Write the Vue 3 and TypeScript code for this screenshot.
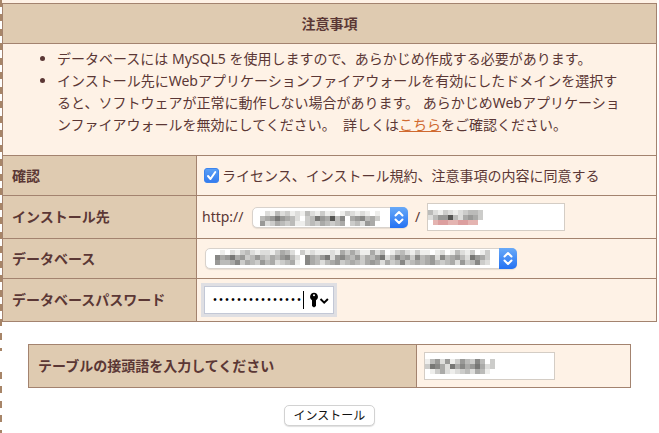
<script setup lang="ts">
import { ref } from 'vue'

interface Mosaic {
  cols: number
  rows: string[]
  pink?: boolean
}

// Each hex digit is the grey level of one 5px block; "f" leaves the block clear.
const hostMosaic: Mosaic = {
  cols: 24,
  rows: [
    'fdebdcedebdecedfecdedefe',
    'ba979abdfcb79a5b8fa98bac',
    '9dcabcbeecbcabcbafcbd9af',
  ],
}
const pathMosaic: Mosaic = {
  cols: 11,
  rows: ['bdecdedcbbc', 'db995bda9ac', 'feddeeddeef'],
  pink: true,
}
const databaseMosaic: Mosaic = {
  cols: 55,
  rows: [
    'fefdecbdeddecabdfcedeeedeacaceeadbfecbdeceefedfebdecfec',
    '8a97a9cb9bcab98bdf8ab97d98ab9cab97db8a9c8ba9d8ba9bd79ac',
    '9bba8cabc9badcbaef8abdba9cbabca9adacb8cbaba9bcbad9cb8cd',
  ],
}
const prefixMosaic: Mosaic = {
  cols: 14,
  rows: ['eb9d9ec9bc8bfc', 'c78ad7a8a97adc', 'fecadedcbdabef'],
}

function blockFill(m: Mosaic, digit: string, row: number, col: number): string {
  if (m.pink && row === 2 && col > 0 && col < m.cols - 1) {
    return digit === 'd' ? '#dc9f9f' : '#e4b4b1'
  }
  if (digit === 'f') return 'none'
  const v = parseInt(digit, 16) * 17
  return `rgb(${v}, ${v}, ${v - 2})`
}

const agreed = ref(true)
const password = ref('•'.repeat(15))
</script>

<template>
  <main class="page">
    <div class="rail" aria-hidden="true">
      <span class="rail-top"></span>
      <span class="rail-bottom"></span>
    </div>

    <form class="content" @submit.prevent>
      <div class="settings">
        <table class="grid">
          <colgroup>
            <col class="name-col" />
            <col />
          </colgroup>
          <tbody>
            <tr class="row">
              <th class="title" colspan="2">注意事項</th>
            </tr>
            <tr>
              <td class="notes" colspan="2">
                <ul>
                  <li>データベースには MySQL5 を使用しますので、あらかじめ作成する必要があります。</li>
                  <li>
                    インストール先にWebアプリケーションファイアウォールを有効にしたドメインを選択す<br />ると、ソフトウェアが正常に動作しない場合があります。
                    あらかじめWebアプリケーショ<br />ンファイアウォールを無効にしてください。&nbsp; 詳しくは<a href="#">こちら</a>をご確認ください。
                  </li>
                </ul>
              </td>
            </tr>
            <tr class="row">
              <th class="name">確認</th>
              <td>
                <label class="agree">
                  <span class="check">
                    <input v-model="agreed" type="checkbox" />
                    <svg v-if="agreed" viewBox="0 0 15 15" aria-hidden="true">
                      <path d="M4 8 6.5 11 11.3 4" />
                    </svg>
                  </span>
                  <span>ライセンス、インストール規約、注意事項の内容に同意する</span>
                </label>
              </td>
            </tr>
            <tr class="row tall">
              <th class="name"><label for="host">インストール先</label></th>
              <td>
                <div class="line">
                  <span class="scheme">http://</span>
                  <span class="picker host">
                    <select id="host"></select>
                    <svg class="mosaic" :viewBox="`0 0 ${hostMosaic.cols * 5} 15`" :width="hostMosaic.cols * 5" height="15" aria-hidden="true">
                      <g v-for="(r, y) in hostMosaic.rows" :key="y">
                        <rect v-for="(d, x) in r.split('')" :key="x" :x="x * 5" :y="y * 5" width="5" height="5" :fill="blockFill(hostMosaic, d, y, x)" />
                      </g>
                    </svg>
                    <svg class="arrows" viewBox="0 0 18 21" aria-hidden="true">
                      <path d="M5.500 8.500 9 5l3.500 3.500M5.500 12.500 9 16l3.500-3.500" />
                    </svg>
                  </span>
                  <span class="slash">/</span>
                  <span class="field path">
                    <input type="text" aria-label="パス" />
                    <svg class="mosaic" :viewBox="`0 0 ${pathMosaic.cols * 5} 15`" :width="pathMosaic.cols * 5" height="15" aria-hidden="true">
                      <g v-for="(r, y) in pathMosaic.rows" :key="y">
                        <rect v-for="(d, x) in r.split('')" :key="x" :x="x * 5" :y="y * 5" width="5" height="5" :fill="blockFill(pathMosaic, d, y, x)" />
                      </g>
                    </svg>
                  </span>
                </div>
              </td>
            </tr>
            <tr class="row">
              <th class="name"><label for="database">データベース</label></th>
              <td>
                <div class="line">
                  <span class="picker database">
                    <select id="database"></select>
                    <svg class="mosaic" :viewBox="`0 0 ${databaseMosaic.cols * 5} 15`" :width="databaseMosaic.cols * 5" height="15" aria-hidden="true">
                      <g v-for="(r, y) in databaseMosaic.rows" :key="y">
                        <rect v-for="(d, x) in r.split('')" :key="x" :x="x * 5" :y="y * 5" width="5" height="5" :fill="blockFill(databaseMosaic, d, y, x)" />
                      </g>
                    </svg>
                    <svg class="arrows" viewBox="0 0 18 21" aria-hidden="true">
                      <path d="M5.500 8.500 9 5l3.500 3.500M5.500 12.500 9 16l3.500-3.500" />
                    </svg>
                  </span>
                </div>
              </td>
            </tr>
            <tr class="row tall">
              <th class="name"><label for="password">データベースパスワード</label></th>
              <td>
                <div class="line">
                  <span class="field secret">
                    <input id="password" v-model="password" type="password" />
                    <i class="caret"></i>
                    <svg class="key" viewBox="0 0 20 16" width="20" height="16" aria-hidden="true">
                      <path d="M5 .8a4 4 0 0 0-2 7.400V14l2 1.500L7 14V8.200A4 4 0 0 0 5 .8z" />
                      <circle cx="5" cy="3.200" r="1" fill="#fff" />
                      <path class="chevron" d="m11.500 7 3.700 3.600L18.900 7" />
                    </svg>
                  </span>
                </div>
              </td>
            </tr>
          </tbody>
        </table>
      </div>

      <table class="grid prefix">
        <tbody>
          <tr class="row tall">
            <th class="name"><label for="prefix">テーブルの接頭語を入力してください</label></th>
            <td>
              <span class="field table-prefix">
                <input id="prefix" type="text" />
                <svg class="mosaic" :viewBox="`0 0 ${prefixMosaic.cols * 5} 15`" :width="prefixMosaic.cols * 5" height="15" aria-hidden="true">
                  <g v-for="(r, y) in prefixMosaic.rows" :key="y">
                    <rect v-for="(d, x) in r.split('')" :key="x" :x="x * 5" :y="y * 5" width="5" height="5" :fill="blockFill(prefixMosaic, d, y, x)" />
                  </g>
                </svg>
              </span>
            </td>
          </tr>
        </tbody>
      </table>

      <button class="install" type="submit">インストール</button>
    </form>
  </main>
</template>

<style>
body {
  margin: 0;
  background: #fff;
}
</style>

<style scoped>
.page {
  display: flex;
  min-height: 100vh;
  overflow: hidden;
  color: #5b3735;
  font: 14px/22px "Noto Sans", "Noto Sans CJK JP", sans-serif;
}
.rail {
  display: flex;
  flex-direction: column;
  gap: 21px;
  width: 2px;
}
.rail span {
  background: repeating-linear-gradient(#a78568 0 7px, #fff 7px 14px, #a78568 14px 21px, #fff 21px 29px);
}
.rail-top {
  height: 351px;
}
.rail-bottom {
  flex: 1;
}
.content {
  display: flex;
  flex: 1;
  flex-direction: column;
  min-width: 0;
  padding-right: 2px;
}
.settings {
  padding-top: 3px;
  background: #fef2e6;
}
.grid {
  width: 100%;
  border-collapse: collapse;
  table-layout: fixed;
  background: #fef2e6;
}
.name-col {
  width: 194px;
}
th,
td {
  box-sizing: border-box;
  padding: 0 5px;
  border: 1px solid #a3836f;
  text-align: left;
  vertical-align: middle;
}
th {
  background: #dfcbb1;
  font-weight: 700;
}
.row {
  height: 40px;
}
.row.tall {
  height: 43px;
}
.title {
  text-align: center;
}
.name {
  padding-left: 9px;
}
.notes {
  padding: 4px 0 19px 54px;
  white-space: nowrap;
}
.notes ul {
  margin: 0;
  padding: 0;
}
a {
  color: #d06a30;
  text-decoration: underline;
}
.agree {
  display: flex;
  align-items: center;
  gap: 3px;
  padding-left: 2px;
}
.check {
  position: relative;
  width: 15px;
  height: 15px;
}
.check input {
  width: 15px;
  height: 15px;
  margin: 0;
  border: 1px solid #b9b9b9;
  border-radius: 3px;
  background: #fff;
  appearance: none;
  display: block;
}
.check input:checked {
  border-color: #3c84ee;
  background: linear-gradient(#5ba0f6, #357cee);
}
.check svg {
  position: absolute;
  inset: 0;
  fill: none;
  stroke: #fff;
  stroke-width: 2;
  stroke-linecap: round;
  stroke-linejoin: round;
  pointer-events: none;
}
.line {
  display: flex;
  align-items: center;
}
.scheme {
  width: 50px;
}
.picker,
.field {
  position: relative;
  display: block;
}
.picker select {
  display: block;
  box-sizing: border-box;
  width: 100%;
  height: 21px;
  border: 1px solid #d8d2cc;
  border-radius: 5px;
  background: #fff;
  box-shadow: 0 1px 1px #00000018;
  appearance: none;
}
.host {
  width: 156px;
}
.database {
  width: 312px;
  margin-left: 3px;
}
.mosaic {
  position: absolute;
  top: 4px;
  left: 8px;
  pointer-events: none;
}
.database .mosaic {
  top: 2px;
  left: 10px;
}
.arrows {
  position: absolute;
  top: 0;
  right: 0;
  width: 18px;
  height: 21px;
  border-radius: 0 5px 5px 0;
  background: linear-gradient(#69aaf8, #2371f3);
  fill: none;
  stroke: #fff;
  stroke-width: 2;
  stroke-linecap: round;
  stroke-linejoin: round;
  pointer-events: none;
}
.slash {
  padding: 0 7px;
}
.field input {
  display: block;
  box-sizing: border-box;
  width: 100%;
  height: 28px;
  padding: 0 7px;
  border: 1px solid #d4cdc5;
  background: #fff;
  outline: none;
}
.path {
  width: 138px;
}
.field .mosaic {
  top: 7px;
  left: 1px;
}
.secret {
  width: 130px;
  margin-left: 2px;
}
.secret input {
  padding-right: 32px;
  border-color: #c3c8d6;
  box-shadow: 0 0 0 3px #dfdfe3;
  color: #000;
  font: 10px "Liberation Mono", monospace;
}
.caret {
  position: absolute;
  top: 5px;
  left: 99px;
  width: 1px;
  height: 18px;
  background: #000;
}
.key {
  position: absolute;
  top: 6px;
  left: 105px;
}
.key .chevron {
  fill: none;
  stroke: #000;
  stroke-width: 2;
}
.prefix {
  width: auto;
  margin: 22px 26px 0;
}
.prefix .name {
  width: 388px;
}
.prefix td {
  padding-left: 7px;
}
.table-prefix {
  width: 131px;
}
.install {
  align-self: center;
  margin-top: 17px;
  padding: 0 9px;
  border: 1px solid #d2d2d2;
  border-radius: 5px;
  background: #fff;
  box-shadow: 0 1px 1px #00000020;
  color: #111;
  font: 12px/19px "Noto Sans", "Noto Sans CJK JP", sans-serif;
}
</style>
